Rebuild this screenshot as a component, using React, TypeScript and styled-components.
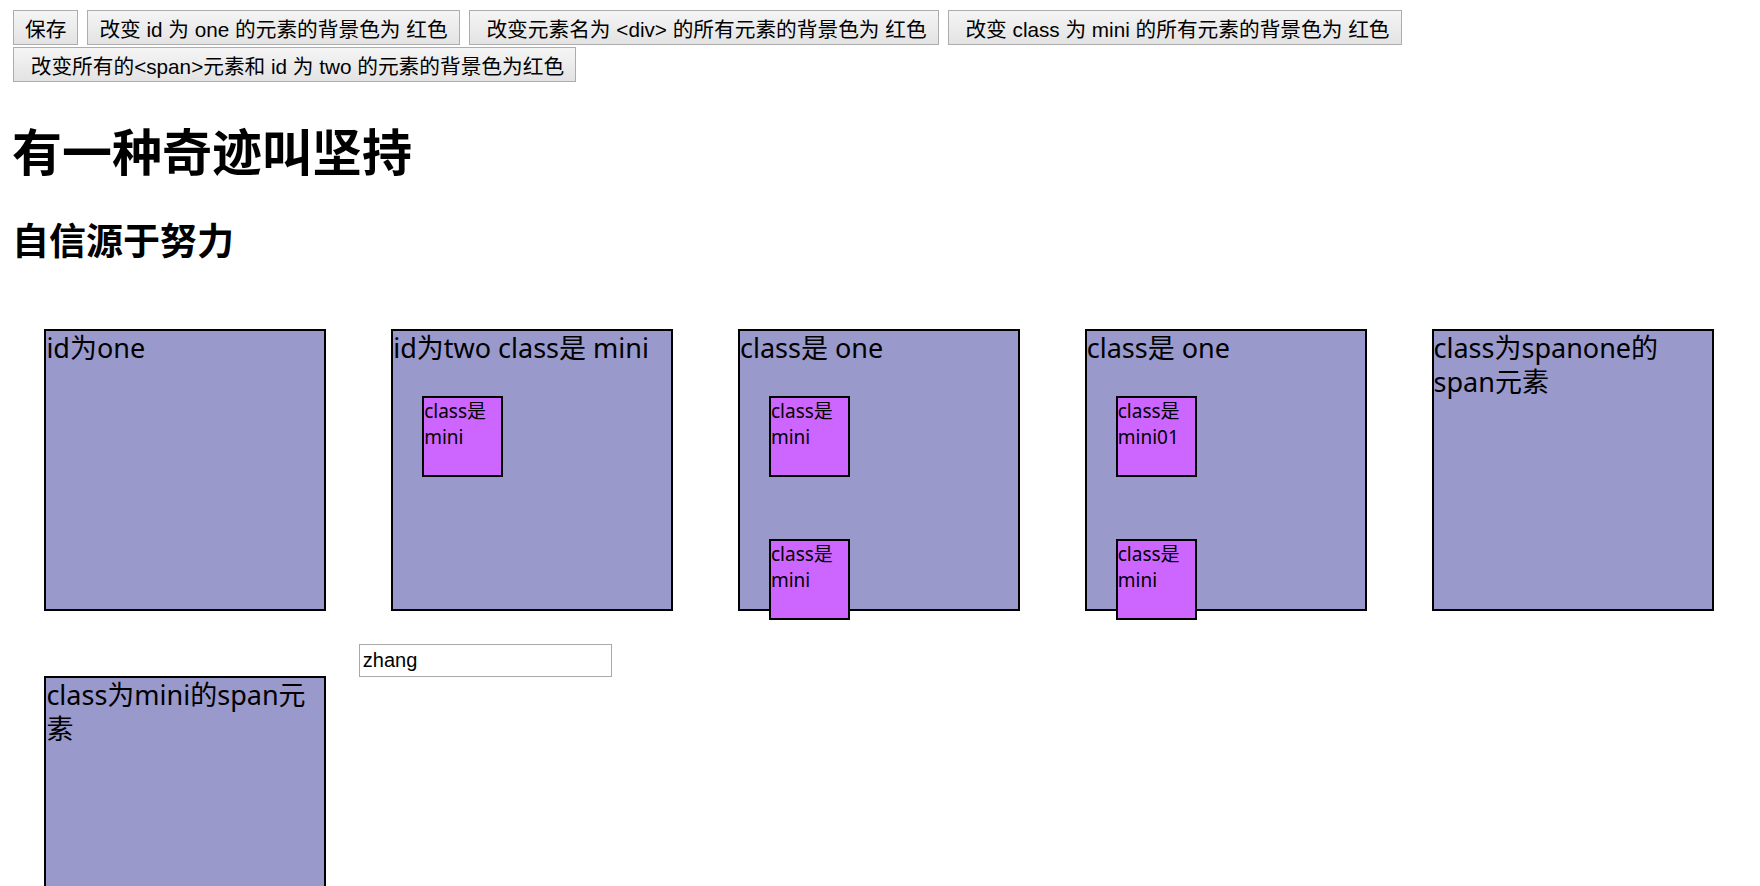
import React from "react";
import styled, { createGlobalStyle } from "styled-components";

const GlobalStyle = createGlobalStyle`
	html, body {
		margin: 0;
		padding: 0;
		background: #ffffff;
		overflow: hidden;
	}
	body {
		font-family: "Noto Sans", "Noto Sans CJK SC", sans-serif;
		color: #000000;
	}
`;

const Page = styled.div`
	padding: 10px 12px 0;
`;

const Toolbar = styled.div`
	display: flex;
	flex-wrap: wrap;
	row-gap: 2px;
	column-gap: 9px;
	padding-left: 1px;
`;

const Button = styled.button`
	box-sizing: border-box;
	height: 35px;
	padding: 3px 11px 0;
	font-family: "Liberation Sans", "Noto Sans CJK SC", sans-serif;
	font-size: 20.7px;
	line-height: 23px;
	color: #000000;
	white-space: pre;
	background: linear-gradient(#f5f5f5, #e3e3e3);
	border: 1px solid #adadad;
	border-radius: 0;
	cursor: pointer;
`;

const Title = styled.h1`
	margin: 37px 0 0;
	font-family: "Noto Sans CJK SC", sans-serif;
	font-size: 50px;
	line-height: 60px;
	font-weight: 700;
`;

const Subtitle = styled.h2`
	margin: 37px 0 0;
	padding-bottom: 35px;
	font-family: "Noto Sans CJK SC", sans-serif;
	font-size: 37px;
	line-height: 46px;
	font-weight: 700;
`;

const BoxRow = styled.div`
	display: flex;
	align-items: flex-start;
`;

const Box = styled.div`
	box-sizing: border-box;
	width: 282px;
	height: 282px;
	margin: 32.4px;
	display: flex;
	flex-direction: column;
	align-items: flex-start;
	background: #9999cc;
	border: 2px solid #000000;
	font-size: 27px;
	line-height: 34px;
`;

const Label = styled.div`
	word-break: normal;
`;

const Mini = styled.div`
	box-sizing: border-box;
	width: 81px;
	height: 81px;
	margin: 31px 29px;
	flex-shrink: 0;
	background: #cc66ff;
	border: 2px solid #000000;
	font-size: 19px;
	line-height: 26px;
`;

const NameInput = styled.input`
	box-sizing: border-box;
	width: 253px;
	height: 33px;
	margin: 0;
	padding: 0 3px;
	font-family: "Liberation Sans", "Noto Sans CJK SC", sans-serif;
	font-size: 20px;
	color: #000000;
	border: 1px solid #a9a9a9;
	outline: none;
`;

const buttons = [
	"保存",
	"改变 id 为 one 的元素的背景色为 红色",
	"\u00a0改变元素名为 <div> 的所有元素的背景色为 红色",
	"\u00a0改变 class 为 mini 的所有元素的背景色为 红色",
	"\u00a0改变所有的<span>元素和 id 为 two 的元素的背景色为红色",
];

const App: React.FC = () => {
	return (
		<Page>
			<GlobalStyle />
			<Toolbar>
				{buttons.map((b) => (
					<Button key={b}>{b}</Button>
				))}
			</Toolbar>
			<Title>有一种奇迹叫坚持</Title>
			<Subtitle>自信源于努力</Subtitle>
			<BoxRow>
				<Box>
					<Label>id为one</Label>
				</Box>
				<Box>
					<Label>id为two class是 mini</Label>
					<Mini>class是mini</Mini>
				</Box>
				<Box>
					<Label>class是 one</Label>
					<Mini>class是mini</Mini>
					<Mini>class是mini</Mini>
				</Box>
				<Box>
					<Label>class是 one</Label>
					<Mini>class是mini01</Mini>
					<Mini>class是mini</Mini>
				</Box>
				<Box>
					<Label>class为spanone的span元素</Label>
				</Box>
			</BoxRow>
			<BoxRow>
				<Box>
					<Label>class为mini的span元素</Label>
				</Box>
				<NameInput defaultValue="zhang" />
			</BoxRow>
		</Page>
	);
};

export default App;
